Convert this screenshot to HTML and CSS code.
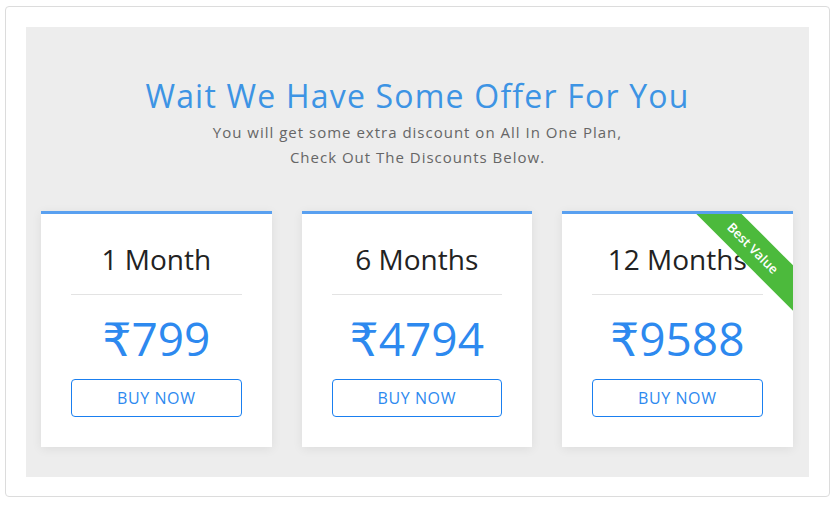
FILE: index.html
```html
<!DOCTYPE html>
<html>
<head>
<meta charset="utf-8">
<link rel="stylesheet" href="styles.css">
</head>
<body>
<div class="outer">
  <div class="panel">
    <h1 class="heading">Wait We Have Some Offer For You</h1>
    <p class="sub">You will get some extra discount on All In One Plan,<br>Check Out The Discounts Below.</p>
    <div class="cards">
      <div class="card">
        <div class="title">1 Month</div>
        <div class="divider"></div>
        <div class="price">₹799</div>
        <button class="btn">BUY NOW</button>
      </div>
      <div class="card">
        <div class="title">6 Months</div>
        <div class="divider"></div>
        <div class="price">₹4794</div>
        <button class="btn">BUY NOW</button>
      </div>
      <div class="card">
        <div class="ribbon">Best Value</div>
        <div class="title">12 Months</div>
        <div class="divider"></div>
        <div class="price">₹9588</div>
        <button class="btn">BUY NOW</button>
      </div>
    </div>
  </div>
</div>
</body>
</html>
```
FILE: styles.css
```css
* { box-sizing: border-box; }
body {
  margin: 0;
  background: #fff;
  font-family: "Open Sans", "DejaVu Sans", sans-serif;
}
.outer {
  margin: 6px 6px 0 5px;
  width: 825px;
  height: 491px;
  border: 1px solid #dcdcdc;
  border-radius: 4px;
  padding: 20px;
}
.panel {
  background: #ededed;
  height: 450px;
  padding: 49px 15px 0 15px;
  text-align: center;
}
.heading {
  margin: 0;
  font-size: 32px;
  line-height: 40px;
  font-weight: 400;
  letter-spacing: 1.2px;
  color: #3d94e4;
}
.sub {
  margin: 4px 0 0;
  font-size: 15px;
  line-height: 25px;
  letter-spacing: 1px;
  color: #666;
}
.cards {
  margin-top: 41px;
  display: flex;
  gap: 30px;
}
.card {
  position: relative;
  overflow: hidden;
  width: 230.5px;
  background: #fff;
  border-top: 3px solid #59a0f0;
  padding: 25px 30px 30px;
  box-shadow: 0 2px 10px rgba(0,0,0,0.07);
}
.title {
  font-size: 28px;
  line-height: 40px;
  color: #222;
}
.divider {
  height: 1px;
  background: #e3e3e3;
  margin-top: 15px;
}
.price {
  margin-top: 15px;
  font-size: 46px;
  line-height: 56px;
  color: #2d89ef;
}
.btn {
  display: block;
  width: 100%;
  margin-top: 13px;
  height: 38px;
  background: #fff;
  border: 1px solid #1a7ff0;
  border-radius: 4px;
  color: #2d89ef;
  font-family: inherit;
  font-size: 16px;
  letter-spacing: 0.6px;
  cursor: pointer;
}
.ribbon {
  position: absolute;
  left: 111px;
  top: 18px;
  width: 160px;
  height: 32px;
  line-height: 32px;
  background: #4cba3c;
  color: #fff;
  font-size: 13px;
  font-weight: 600;
  transform: rotate(45deg);
}
```
